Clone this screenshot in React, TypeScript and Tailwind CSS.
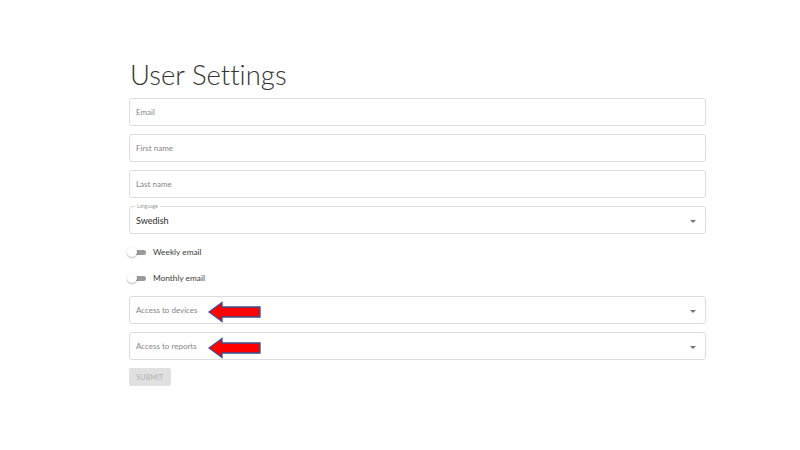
import React from "react";

const font = { fontFamily: "Lato, 'Open Sans', sans-serif" };

function Caret() {
  return (
    <svg width="6" height="3" viewBox="0 0 6 3" className="absolute right-[9px] top-[13px]">
      <path d="M0 0 L6 0 L3 3 Z" fill="#757575" />
    </svg>
  );
}

function Arrow() {
  return (
    <svg
      width="54"
      height="22"
      viewBox="0 0 54 22"
      className="absolute left-[78px] top-[4px]"
    >
      <path
        d="M1 11 L14 1.5 L14 6 L52 6 L52 16 L14 16 L14 20.5 Z"
        fill="#ff0000"
        stroke="#3a4f8f"
        strokeWidth="1.3"
        strokeLinejoin="miter"
      />
    </svg>
  );
}

function TextField({ label }: { label: string }) {
  return (
    <div className="h-[28px] border border-[#dcdcdc] rounded-[3px] flex items-center pl-[6px] text-[8px] text-[#858585]">
      {label}
    </div>
  );
}

function SelectField({ label, arrow }: { label: string; arrow?: boolean }) {
  return (
    <div className="relative h-[28px] border border-[#dcdcdc] rounded-[3px] flex items-center pl-[6px] text-[8px] text-[#858585]">
      {label}
      <Caret />
      {arrow && <Arrow />}
    </div>
  );
}

function Toggle({ label }: { label: string }) {
  return (
    <div className="flex items-center h-[20px]">
      <div className="relative w-[20px] h-[12px] ml-[-2px]">
        <div className="absolute left-[6px] top-[4px] w-[13px] h-[5px] rounded-full bg-[#9a9a9a]" />
        <div className="absolute left-[0px] top-[1px] w-[10px] h-[10px] rounded-full bg-white shadow-[0_1px_2px_rgba(0,0,0,0.3)]" />
      </div>
      <span className="ml-[6px] text-[8.3px] text-[#3a3a3a]">{label}</span>
    </div>
  );
}

export default function App() {
  return (
    <div className="w-[800px] h-[450px] bg-white overflow-hidden" style={font}>
      <div className="ml-[129px] w-[577px] pt-[58px] flex flex-col">
        <h1 className="text-[27.5px] leading-[34px] font-light text-[#333] ml-[1px] mb-[6px] [font-variant-ligatures:none]">
          User Settings
        </h1>
        <div className="flex flex-col gap-[8px]">
          <TextField label="Email" />
          <TextField label="First name" />
          <TextField label="Last name" />
          <div className="relative h-[28px] border border-[#dcdcdc] rounded-[3px] flex items-center pl-[6px] pt-[2px] text-[9px] text-[#2a2a2a]">
            <span className="absolute left-[5px] top-[-4px] bg-white px-[2px] text-[5px] leading-[6px] text-[#999]">
              Language
            </span>
            Swedish
            <Caret />
          </div>
        </div>
        <div className="mt-[8px]">
          <Toggle label="Weekly email" />
        </div>
        <div className="mt-[6px]">
          <Toggle label="Monthly email" />
        </div>
        <div className="flex flex-col gap-[8px] mt-[8px]">
          <SelectField label="Access to devices" arrow />
          <SelectField label="Access to reports" arrow />
        </div>
        <div className="mt-[8px]">
          <div className="w-[42px] h-[18px] rounded-[2px] bg-[#e0e0e0] text-[#b0b0b0] text-[7px] tracking-[0.2px] flex items-center justify-center">
            SUBMIT
          </div>
        </div>
      </div>
    </div>
  );
}
